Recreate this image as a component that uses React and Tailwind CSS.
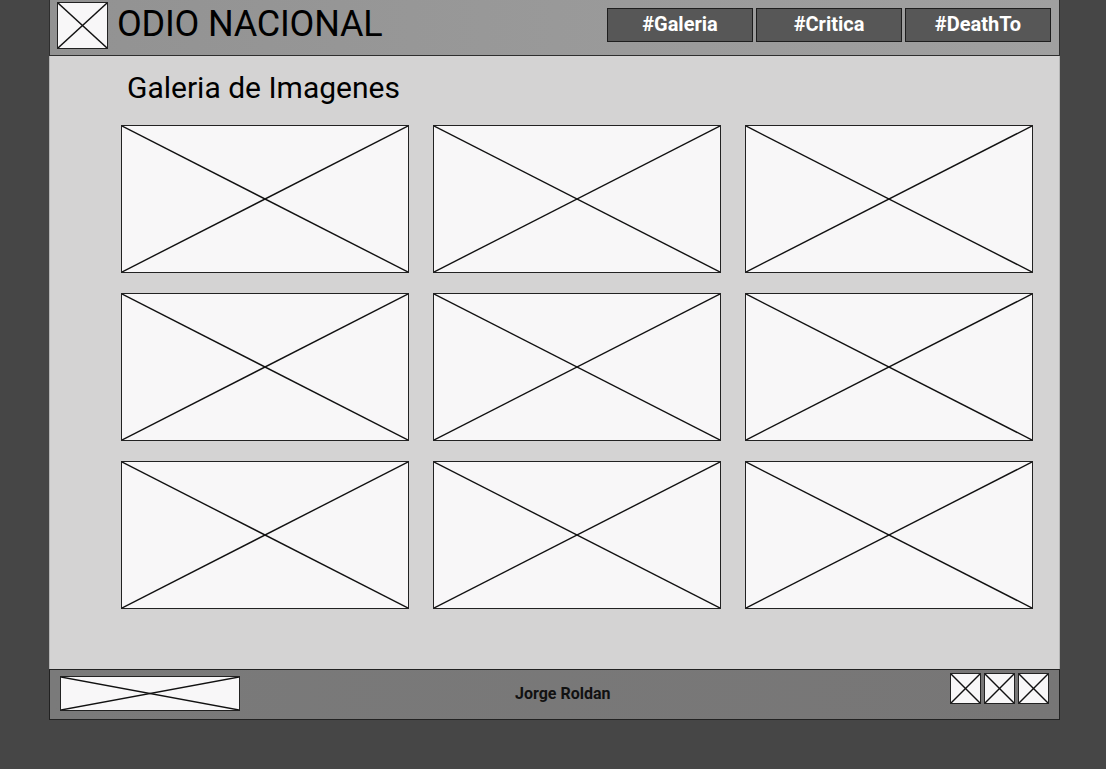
import React from 'react';

const font = { fontFamily: 'Roboto, "Liberation Sans", sans-serif' };

// placeholder box with the crossed lines, like a wireframe image
const XBox = ({ className }) => (
  <div className={`relative bg-[#f8f7f8] border border-[#222] ${className}`}>
    <svg className="absolute inset-0 w-full h-full" viewBox="0 0 100 100" preserveAspectRatio="none">
      <line x1="0" y1="0" x2="100" y2="100" stroke="#111" strokeWidth="1.4" vectorEffect="non-scaling-stroke" />
      <line x1="100" y1="0" x2="0" y2="100" stroke="#111" strokeWidth="1.4" vectorEffect="non-scaling-stroke" />
    </svg>
  </div>
);

const navItems = ['#Galeria', '#Critica', '#DeathTo'];

export default function App() {
  return (
    <div className="w-[1106px] h-[769px] bg-[#464646] overflow-hidden" style={font}>
      <div className="ml-[49px] w-[1011px] flex flex-col">
        <header className="h-[56px] bg-gradient-to-r from-[#929292] to-[#a0a0a0] border-l border-r border-b border-[#2e2e2e] flex items-start">
          <XBox className="w-[51px] h-[47px] ml-[7px] mt-[2px]" />
          <h1 className="ml-[9px] mt-[2px] text-[36px] leading-[44px] text-black tracking-[-0.2px]">ODIO NACIONAL</h1>
          <nav className="ml-auto mr-[8px] mt-[8px] flex gap-[3px]">
            {navItems.map((item) => (
              <div
                key={item}
                className="w-[146px] h-[34px] bg-[#575757] border border-[#1e1e1e] flex items-center justify-center text-white font-bold text-[20px] pb-[3px]"
              >
                {item}
              </div>
            ))}
          </nav>
        </header>

        <main className="h-[613px] bg-[#d4d3d3] border-l border-r border-[#b5b5b5] pl-[71px] pt-[13px]">
          <h2 className="ml-[6px] text-[30px] leading-[38px] text-black">Galeria de Imagenes</h2>
          <div className="mt-[18px] grid grid-cols-[288px_288px_288px] auto-rows-[148px] gap-x-[24px] gap-y-[20px]">
            {Array.from({ length: 9 }).map((_, i) => (
              <XBox key={i} className="w-full h-full" />
            ))}
          </div>
        </main>

        <footer className="h-[51px] bg-gradient-to-r from-[#7a7a7a] to-[#777676] border border-[#222] flex items-start">
          <XBox className="w-[180px] h-[35px] ml-[10px] mt-[6px]" />
          <span className="ml-[275px] mt-[12px] text-[16px] font-bold text-[#111]">Jorge Roldan</span>
          <div className="ml-auto mr-[10px] mt-[3px] flex gap-[3px]">
            <XBox className="w-[31px] h-[31px]" />
            <XBox className="w-[31px] h-[31px]" />
            <XBox className="w-[31px] h-[31px]" />
          </div>
        </footer>
      </div>
    </div>
  );
}
